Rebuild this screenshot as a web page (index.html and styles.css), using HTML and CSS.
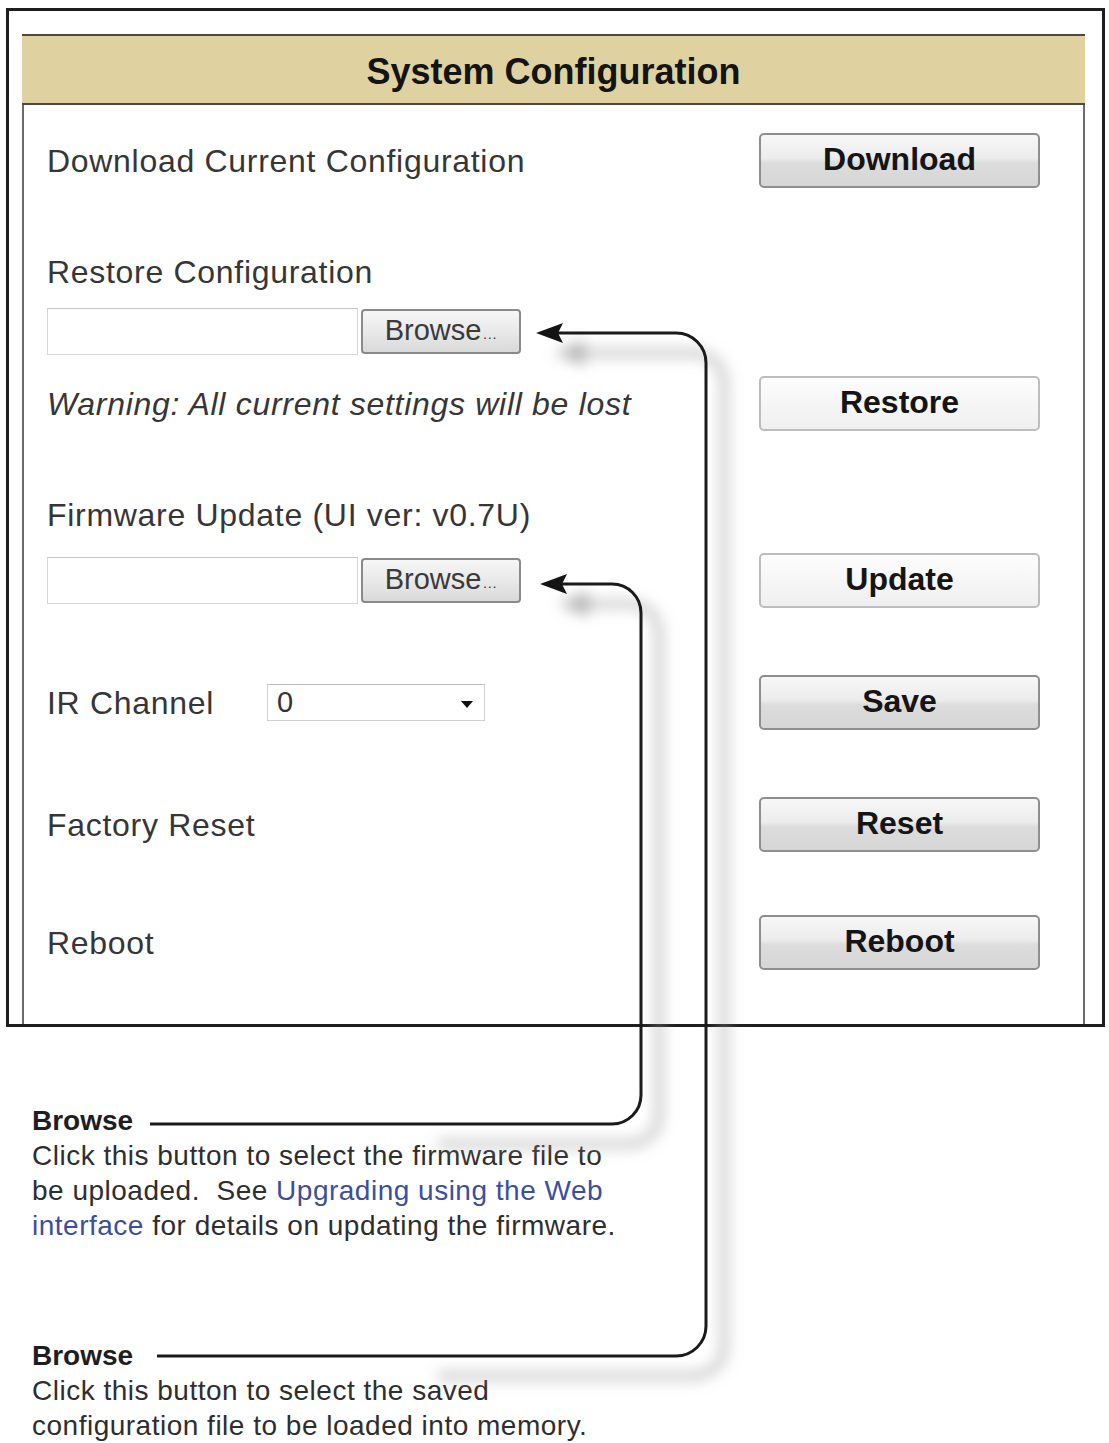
FILE: index.html
```html
<!DOCTYPE html>
<html lang="en">
<head>
<meta charset="utf-8">
<title>System Configuration</title>
<link rel="stylesheet" href="styles.css">
</head>
<body>
<div class="page">
  <div class="frame">
    <div class="panel">
      <div class="panel-head">System Configuration</div>
      <div class="panel-body">
        <div class="row row-first">
          <span class="label">Download Current Configuration</span>
          <div class="btn">Download</div>
        </div>

        <div class="row row-label row-gap">
          <span class="label">Restore Configuration</span>
        </div>
        <div class="row row-file">
          <div class="file">
            <div class="file-box"></div>
            <div class="file-btn">Browse<span class="dots">…</span></div>
          </div>
        </div>
        <div class="row row-after-file">
          <span class="label warn">Warning: All current settings will be lost</span>
          <div class="btn btn-light">Restore</div>
        </div>

        <div class="row row-label row-gap">
          <span class="label">Firmware Update (UI ver: v0.7U)</span>
        </div>
        <div class="row row-after-file">
          <div class="file">
            <div class="file-box"></div>
            <div class="file-btn">Browse<span class="dots">…</span></div>
          </div>
          <div class="btn btn-light">Update</div>
        </div>

        <div class="row row-gap">
          <div class="ir">
            <span class="label ir-label">IR Channel</span>
            <div class="select"><span>0</span><i class="caret"></i></div>
          </div>
          <div class="btn">Save</div>
        </div>

        <div class="row row-gap">
          <span class="label">Factory Reset</span>
          <div class="btn">Reset</div>
        </div>

        <div class="row row-gap-sm">
          <span class="label">Reboot</span>
          <div class="btn">Reboot</div>
        </div>
      </div>
    </div>
  </div>

  <div class="note note-first">
    <div class="note-title">Browse</div>
    <div class="note-line">Click this button to select the firmware file to</div>
    <div class="note-line">be uploaded.&nbsp; See <span class="link">Upgrading using the Web</span></div>
    <div class="note-line"><span class="link">interface</span> for details on updating the firmware.</div>
  </div>

  <div class="note note-second">
    <div class="note-title">Browse</div>
    <div class="note-line">Click this button to select the saved</div>
    <div class="note-line">configuration file to be loaded into memory.</div>
  </div>

  <svg class="callouts" width="1109" height="1443" viewBox="0 0 1109 1443">
    <defs>
      <filter id="soft" x="-20%" y="-5%" width="140%" height="110%">
        <feGaussianBlur stdDeviation="7"/>
      </filter>
    </defs>
    <g class="callout-shadow" filter="url(#soft)" transform="translate(18 20)">
      <path d="M560 333 H676 A30 30 0 0 1 706 363 V1326 A30 30 0 0 1 676 1356 H420"/>
      <path d="M564 584 H612 A29 29 0 0 1 641 613 V1095 A29 29 0 0 1 612 1124 H420"/>
      <polygon points="536,333 566,320 566,346"/>
      <polygon points="540,584 570,571 570,597"/>
    </g>
    <g class="callout-line">
      <path d="M556 333 H676 A30 30 0 0 1 706 363 V1326 A30 30 0 0 1 676 1356 H157"/>
      <path d="M560 584 H612 A29 29 0 0 1 641 613 V1095 A29 29 0 0 1 612 1124 H150"/>
    </g>
    <g class="callout-head">
      <polygon points="536,333 563,323 558,333 563,343"/>
      <polygon points="540,584 567,574 562,584 567,594"/>
    </g>
  </svg>
</div>
</body>
</html>
```

FILE: styles.css
```css
html, body {
  margin: 0;
  padding: 0;
  background: #ffffff;
}

.page {
  position: relative;
  width: 1109px;
  height: 1443px;
  overflow: hidden;
  font-family: "Liberation Sans", Arial, sans-serif;
  color: #333333;
  padding-top: 8px;
  box-sizing: border-box;
}

/* outer window frame */
.frame {
  margin-left: 6px;
  width: 1099px;
  height: 1019px;
  border: 3px solid #1e1e1e;
  box-sizing: border-box;
  display: flex;
  flex-direction: column;
}

.panel {
  margin-left: 13px;
  margin-top: 23px;
  width: 1063px;
  flex: 1;
  border-left: 2px solid #6b6b6b;
  border-right: 2px solid #6b6b6b;
  box-sizing: border-box;
  display: flex;
  flex-direction: column;
}

.panel-head {
  height: 71px;
  background: #dfd2a0;
  border-top: 2px solid #4a4a42;
  border-bottom: 2px solid #4a4a42;
  margin: 0 -2px;
  box-sizing: border-box;
  display: flex;
  align-items: center;
  justify-content: center;
  font-weight: bold;
  font-size: 36px;
  color: #141414;
  padding-top: 4px;
}

.panel-body {
  padding: 28px 43px 0 23px;
  display: flex;
  flex-direction: column;
}

.row {
  display: flex;
  align-items: center;
  justify-content: space-between;
  height: 55px;
}

.row-label { height: 34px; }
.row-gap { margin-top: 67px; }
.row-gap-sm { margin-top: 63px; }
.row-file { height: 47px; margin-top: 19px; }
.row-after-file { margin-top: 21px; }

.label {
  font-size: 32px;
  line-height: 34px;
  letter-spacing: 0.7px;
  color: #363636;
  white-space: nowrap;
}

.warn {
  font-style: italic;
}

/* push-buttons in the right column */
.btn {
  width: 281px;
  height: 55px;
  box-sizing: border-box;
  border: 2px solid #8e8e8e;
  border-radius: 5px;
  background: linear-gradient(#f7f7f7 0%, #ececec 45%, #dcdcdc 55%, #d6d6d6 100%);
  display: flex;
  align-items: center;
  justify-content: center;
  font-weight: bold;
  font-size: 32px;
  color: #151515;
  padding-bottom: 3px;
}

.btn-light {
  border-color: #bdbdbd;
  background: linear-gradient(#fdfdfd 0%, #f6f6f6 50%, #efefef 100%);
}

/* file chooser: text box and Browse button */
.file {
  display: flex;
  align-items: center;
  gap: 3px;
}

.file-box {
  width: 311px;
  height: 47px;
  box-sizing: border-box;
  border: 1px solid #d6d6d6;
  border-top-color: #c4c4c4;
  background: #ffffff;
}

.file-btn {
  width: 160px;
  height: 45px;
  box-sizing: border-box;
  border: 2px solid #8a8a8a;
  border-radius: 4px;
  background: linear-gradient(#f6f6f6 0%, #e9e9e9 50%, #d9d9d9 100%);
  display: flex;
  align-items: center;
  justify-content: center;
  font-size: 29px;
  color: #3a3a3a;
  padding-bottom: 2px;
}

.dots {
  font-size: 15px;
  align-self: flex-end;
  margin-bottom: 8px;
  margin-left: 1px;
}

/* IR channel select */
.ir {
  display: flex;
  align-items: center;
}

.ir-label {
  width: 220px;
}

.select {
  width: 218px;
  height: 37px;
  box-sizing: border-box;
  border: 1px solid #cfcfcf;
  border-top-color: #bdbdbd;
  background: #ffffff;
  display: flex;
  align-items: center;
  justify-content: space-between;
  padding: 0 11px 0 9px;
  font-size: 29px;
  color: #333333;
}

.caret {
  width: 0;
  height: 0;
  border-left: 6px solid transparent;
  border-right: 6px solid transparent;
  border-top: 7px solid #111111;
  margin-top: 3px;
}

/* explanatory notes under the window */
.note {
  margin-left: 32px;
  font-size: 28px;
  line-height: 35px;
  color: #2e2e2e;
  white-space: nowrap;
}

.note-first { margin-top: 76px; }
.note-second { margin-top: 95px; }

.note-title {
  font-weight: bold;
  color: #1e1e1e;
}

.note-line {
  letter-spacing: 0.5px;
}

.link {
  color: #3c4f9e;
}

/* leader lines from the notes to the Browse buttons */
.callouts {
  position: absolute;
  left: 0;
  top: 0;
  pointer-events: none;
}

.callout-shadow path {
  fill: none;
  stroke: #9a9a9a;
  stroke-width: 10;
  opacity: 0.45;
}

.callout-shadow polygon {
  fill: #8a8a8a;
  opacity: 0.6;
}

.callout-line path {
  fill: none;
  stroke: #1a1a1a;
  stroke-width: 3;
}

.callout-head polygon {
  fill: #141414;
}
```
